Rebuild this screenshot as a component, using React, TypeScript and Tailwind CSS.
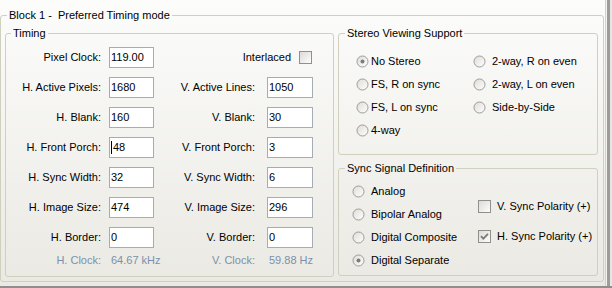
import React from "react";

const font = { fontFamily: '"Liberation Sans", Arial, sans-serif' };

const Radio = ({ checked }: { checked?: boolean }) => (
  <svg width="13" height="13" viewBox="0 0 13 13" className="shrink-0">
    <defs>
      <linearGradient id="rgrad" x1="0" y1="0" x2="1" y2="1">
        <stop offset="0" stopColor="#dedcd6" />
        <stop offset="1" stopColor="#ffffff" />
      </linearGradient>
    </defs>
    <circle cx="6.5" cy="6.5" r="5.5" fill="url(#rgrad)" stroke="#9b9b97" />
    {checked && <circle cx="6.5" cy="6.5" r="2" fill="#7c7c7a" />}
  </svg>
);

const Check = ({ checked }: { checked?: boolean }) => (
  <svg width="13" height="13" viewBox="0 0 13 13" className="shrink-0">
    <defs>
      <linearGradient id="cgrad" x1="0" y1="0" x2="1" y2="1">
        <stop offset="0" stopColor="#dcd8d6" />
        <stop offset="1" stopColor="#ffffff" />
      </linearGradient>
    </defs>
    <rect x="0.5" y="0.5" width="12" height="12" fill="url(#cgrad)" stroke="#8f8f8c" />
    {checked && (
      <path d="M3 6.2 L5.3 8.6 L10 3.9" fill="none" stroke="#7a7a78" strokeWidth="1.8" />
    )}
  </svg>
);

const Field = ({ value, w, caret }: { value: string; w: string; caret?: boolean }) => (
  <div className={`${w} h-[21px] border border-[#a5acb5] bg-white flex items-center pl-[1px] text-black`}>
    {caret && <span className="w-px h-[13px] bg-black mr-[1px]" />}
    {value}
  </div>
);

const Group = ({
  title,
  className,
  indent,
  children,
}: {
  title: string;
  className: string;
  indent: string;
  children: React.ReactNode;
}) => (
  <fieldset className={`border border-[#d0d0bf] rounded-[3px] min-w-0 ${className}`}>
    <legend className={`${indent} px-[2px] leading-[13px] text-black`}>{title}</legend>
    {children}
  </fieldset>
);

type Row = { l1: string; v1: string; l2?: string; v2?: string; caret?: boolean };

const rows: Row[] = [
  { l1: "H. Active Pixels:", v1: "1680", l2: "V. Active Lines:", v2: "1050" },
  { l1: "H. Blank:", v1: "160", l2: "V. Blank:", v2: "30" },
  { l1: "H. Front Porch:", v1: "48", l2: "V. Front Porch:", v2: "3", caret: true },
  { l1: "H. Sync Width:", v1: "32", l2: "V. Sync Width:", v2: "6" },
  { l1: "H. Image Size:", v1: "474", l2: "V. Image Size:", v2: "296" },
  { l1: "H. Border:", v1: "0", l2: "V. Border:", v2: "0" },
];

const stereo = [
  ["No Stereo", "2-way, R on even"],
  ["FS, R on sync", "2-way, L on even"],
  ["FS, L on sync", "Side-by-Side"],
  ["4-way", ""],
];

const sync = ["Analog", "Bipolar Analog", "Digital Composite", "Digital Separate"];

export default function App() {
  return (
    <div className="w-[612px] h-[288px] flex flex-col bg-[#e4e3dc] text-[11px] overflow-hidden" style={font}>
      <div className="flex h-[286px]">
        <div className="w-[606px] h-full bg-gradient-to-b from-[#fcfcfb] to-[#eae9e3] border-r border-[#d3d2c9] pt-[9px]">
          <Group title={"Block 1 -\u00a0 Preferred Timing mode"} indent="ml-[6px]" className="w-[604px] h-[273px]">
            <div className="flex gap-[4px] pl-[4px] pt-[5px]">
              <Group title="Timing" indent="ml-[5px]" className="w-[329px] h-[250px]">
                <div className="pt-[2px]">
                  <div className="flex items-center h-[30px]">
                    <div className="w-[95px] text-right">Pixel Clock:</div>
                    <div className="ml-[8px]">
                      <Field value="119.00" w="w-[45px]" />
                    </div>
                    <div className="w-[159px] flex items-center justify-end gap-[8px] pr-[1px]">
                      <span>Interlaced</span>
                      <Check />
                    </div>
                  </div>
                  {rows.map((r, i) => (
                    <div key={i} className="flex items-center h-[30px]">
                      <div className="w-[95px] text-right">{r.l1}</div>
                      <div className="ml-[8px]">
                        <Field value={r.v1} w="w-[45px]" caret={r.caret} />
                      </div>
                      <div className="w-[101px] text-right">{r.l2}</div>
                      <div className="ml-[12px]">
                        <Field value={r.v2 ?? ""} w="w-[46px]" />
                      </div>
                    </div>
                  ))}
                  <div className="flex items-center h-[16px] text-[#7b91ab]">
                    <div className="w-[95px] text-right">H. Clock:</div>
                    <div className="ml-[8px] w-[45px] pl-[2px] whitespace-nowrap">64.67 kHz</div>
                    <div className="w-[101px] text-right">V. Clock:</div>
                    <div className="ml-[12px] pl-[2px] whitespace-nowrap">59.88 Hz</div>
                  </div>
                </div>
              </Group>
              <div className="flex flex-col gap-[7px]">
                <Group title="Stereo Viewing Support" indent="ml-[6px]" className="w-[260px] h-[128px]">
                  <div className="pt-[10px] pl-[17px]">
                    {stereo.map(([a, b], i) => (
                      <div key={i} className="flex items-center h-[23px]">
                        <div className="w-[117px] flex items-center gap-[2px]">
                          <Radio checked={i === 0} />
                          <span>{a}</span>
                        </div>
                        {b && (
                          <div className="flex items-center gap-[6px]">
                            <Radio />
                            <span>{b}</span>
                          </div>
                        )}
                      </div>
                    ))}
                  </div>
                </Group>
                <Group title="Sync Signal Definition" indent="ml-[6px]" className="w-[260px] h-[114px]">
                  <div className="flex pt-[5px] pl-[13px]">
                    <div className="w-[126px]">
                      {sync.map((s, i) => (
                        <div key={s} className="flex items-center gap-[6px] h-[23px]">
                          <Radio checked={i === 3} />
                          <span>{s}</span>
                        </div>
                      ))}
                    </div>
                    <div className="pt-[11px]">
                      <div className="flex items-center gap-[6px] h-[30px]">
                        <Check />
                        <span>V. Sync Polarity (+)</span>
                      </div>
                      <div className="flex items-center gap-[6px] h-[30px]">
                        <Check checked />
                        <span>H. Sync Polarity (+)</span>
                      </div>
                    </div>
                  </div>
                </Group>
              </div>
            </div>
          </Group>
        </div>
        <div className="flex h-full">
          <div className="w-[1px] bg-[#f4f3ef]" />
          <div className="w-[3px] bg-[#9c9c9a]" />
          <div className="w-[2px] bg-[#e6e6e4]" />
        </div>
      </div>
      <div className="h-[2px] bg-[#8e8e8c]" />
    </div>
  );
}
